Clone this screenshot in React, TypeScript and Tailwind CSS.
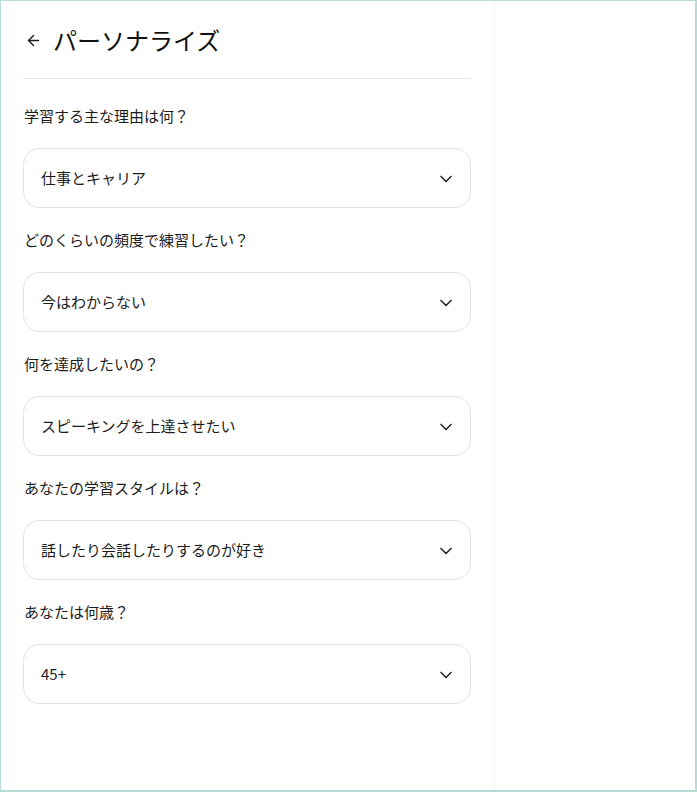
import { ArrowLeft, ChevronDown } from 'lucide-react';

const QUESTIONS = [
  { label: '学習する主な理由は何？', value: '仕事とキャリア' },
  { label: 'どのくらいの頻度で練習したい？', value: '今はわからない' },
  { label: '何を達成したいの？', value: 'スピーキングを上達させたい' },
  { label: 'あなたの学習スタイルは？', value: '話したり会話したりするのが好き' },
  { label: 'あなたは何歳？', value: '45+' },
];

export default function App() {
  return (
    <div
      className="w-[697px] h-[792px] bg-white border-t border-l border-r-2 border-b-2 border-[#b7dcd8] flex text-[#1c1c1c]"
      style={{ fontFamily: '"Noto Sans CJK JP", "Noto Sans", sans-serif' }}
    >
      <div className="w-[494px] h-full border-r border-[#f1f2f3]">
        <div className="ml-[22px] mr-[23px] h-[78px] flex items-center gap-[11px] border-b border-[#e8e8e8] pt-[1px]">
          <ArrowLeft size={17} strokeWidth={2} className="ml-[2px]" />
          <h1 className="text-[24px] leading-8 font-normal text-[#111]">パーソナライズ</h1>
        </div>
        <div className="ml-[22px] mr-[23px] pt-[26px] flex flex-col gap-[21px]">
          {QUESTIONS.map((q) => (
            <div key={q.label} className="contents">
              <p className="text-[15px] leading-[22px] ml-[1px]">{q.label}</p>
              <button className="h-[60px] w-full rounded-2xl border border-[#e3e3e3] pl-[17px] pr-[14px] flex items-center justify-between text-[15px]">
                <span>{q.value}</span>
                <ChevronDown size={20} strokeWidth={2} className="text-[#2a2a2a] mt-[2px]" />
              </button>
            </div>
          ))}
        </div>
      </div>
      <div className="flex-1" />
    </div>
  );
}
